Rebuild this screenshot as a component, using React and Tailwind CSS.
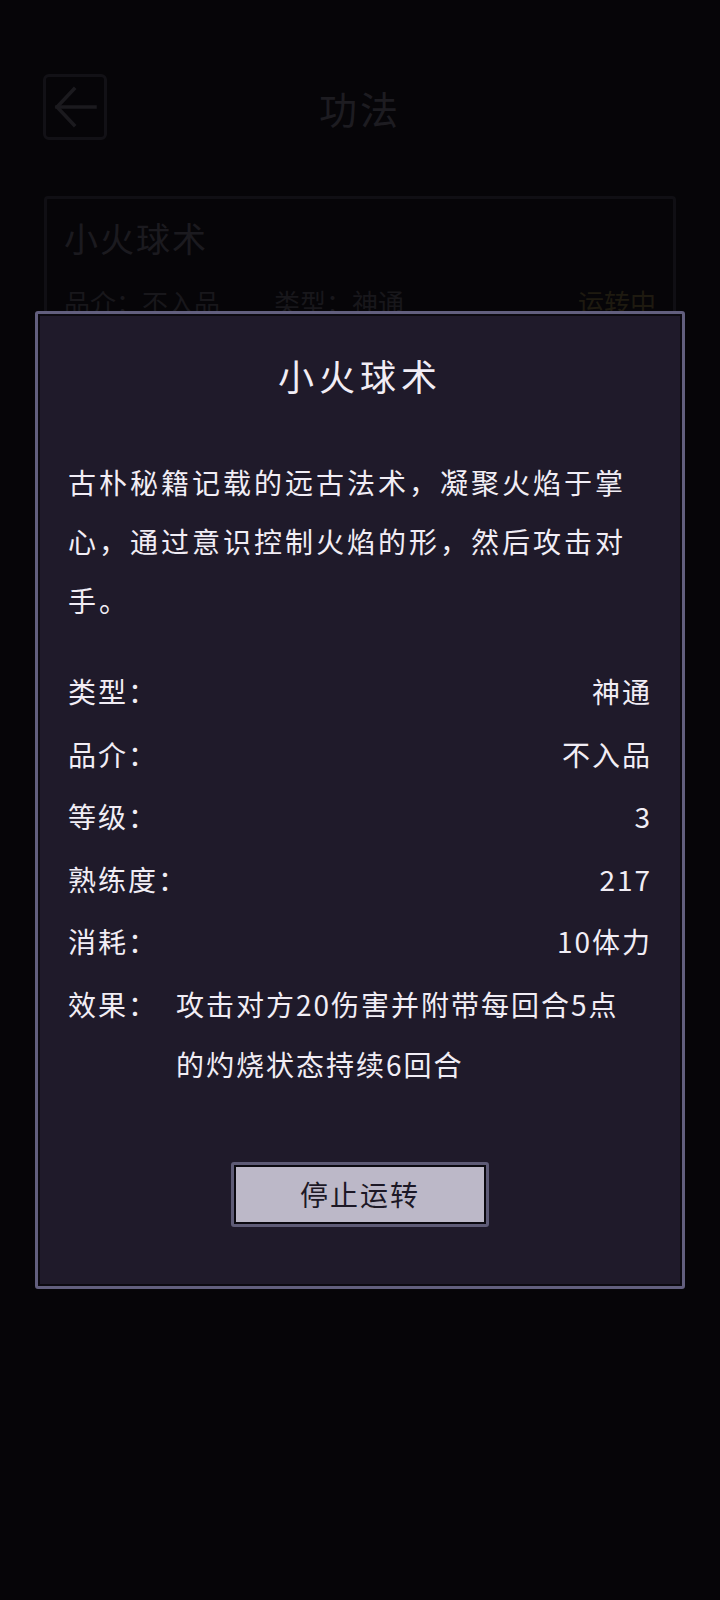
import React from "react";

const FONT = { fontFamily: '"Noto Sans CJK SC", "Noto Sans", sans-serif' };

const stats = [
  { label: "类型：", value: "神通" },
  { label: "品介：", value: "不入品" },
  { label: "等级：", value: "3" },
  { label: "熟练度：", value: "217" },
  { label: "消耗：", value: "10体力" },
];

const BackIcon = () => (
  <svg width="44" height="42" viewBox="0 0 44 42" fill="none" stroke="#36343d" strokeWidth="3.5" strokeLinecap="square">
    <path d="M4 21 H42" />
    <path d="M21 3 L4 21 L21 39" />
  </svg>
);

const SkillCard = () => (
  <div className="mx-[44px] mt-[56px] h-[220px] border-[3px] border-[#211f28] rounded-[4px] px-[17px]">
    <div className="mt-[17px] h-[44px] leading-[44px] text-[34px] tracking-[2px] text-[#37353f]">小火球术</div>
    <div className="mt-[24px] flex items-center text-[26px] leading-[36px] text-[#302e37]">
      <span className="w-[210px]">品介：不入品</span>
      <span>类型：神通</span>
      <span className="ml-auto text-[#3d3420]">运转中</span>
    </div>
  </div>
);

const DetailModal = ({ onStop }) => (
  <div className="absolute inset-0 bg-black/50">
    <div className="ml-[35px] mt-[311px] w-[650px] h-[978px] border-[3px] border-[#625f7e] rounded-[3px] bg-[#1f1a2a] shadow-[inset_0_0_0_2px_#0c0a11] px-[30px] text-[#f1edf5]">
      <h2 className="pt-[39px] h-[85px] leading-[44px] text-center text-[36px] tracking-[5px]">小火球术</h2>

      <div className="mt-[54px] text-[28px] leading-[59px] tracking-[3px] whitespace-nowrap">
        <div>古朴秘籍记载的远古法术，凝聚火焰于掌</div>
        <div>心，通过意识控制火焰的形，然后攻击对</div>
        <div>手。</div>
      </div>

      <div className="mt-[30px]">
        {stats.map((s) => (
          <div key={s.label} className="h-[62.5px] flex items-center justify-between text-[28px] tracking-[2px]">
            <span>{s.label}</span>
            <span>{s.value}</span>
          </div>
        ))}
        <div className="mt-[1px] flex text-[28px] leading-[60px] tracking-[2px]">
          <span className="w-[108px] shrink-0">效果：</span>
          <div className="whitespace-nowrap">
            <div>攻击对方20伤害并附带每回合5点</div>
            <div>的灼烧状态持续6回合</div>
          </div>
        </div>
      </div>

      <div className="mt-[68px] flex justify-center">
        <button
          onClick={onStop}
          className="w-[258px] h-[65px] border-[3px] border-[#5e5b76] rounded-[3px] p-0"
        >
          <div className="h-full w-full border-[2px] border-[#0b0910] bg-[#bcb8c8] text-[#1c1826] text-[28px] tracking-[2px] flex items-center justify-center">
            停止运转
          </div>
        </button>
      </div>
    </div>
  </div>
);

export default function App() {
  return (
    <div className="relative w-[720px] h-[1600px] overflow-hidden bg-[#0c0a10]" style={FONT}>
      {/* header */}
      <div className="relative h-[140px] pt-[74px]">
        <div className="ml-[43px] w-[64px] h-[66px] border-[3px] border-[#25232c] rounded-[6px] flex items-center justify-center">
          <BackIcon />
        </div>
        <div className="absolute left-0 right-0 top-[84px] text-center text-[38px] leading-[48px] tracking-[3px] text-[#3a3843]">功法</div>
      </div>

      <SkillCard />

      <DetailModal onStop={() => {}} />
    </div>
  );
}
